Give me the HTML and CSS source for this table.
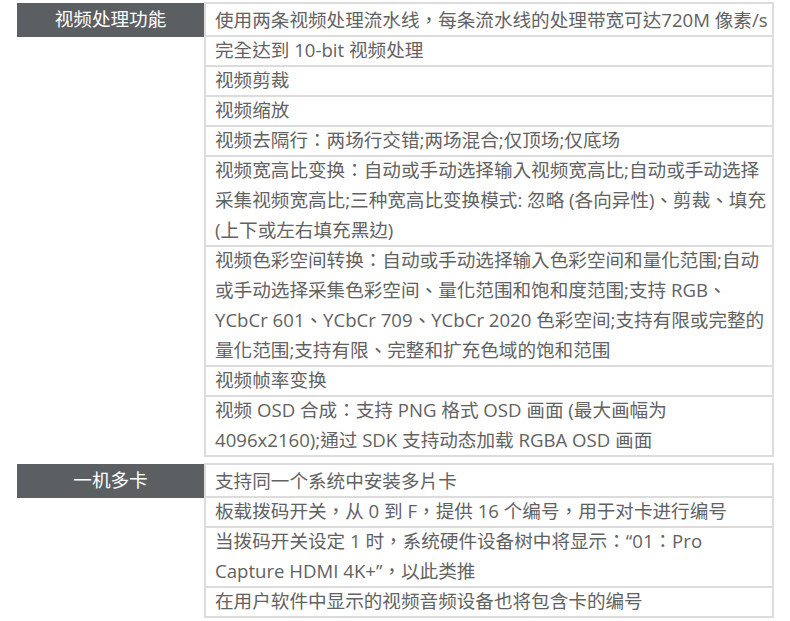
FILE: index.html
```
<!DOCTYPE html>
<html lang="zh-CN">
<head>
    <meta charset="UTF-8">
    <meta name="viewport" content="width=device-width, initial-scale=1.0">
    <title>产品功能</title>
    <link rel="stylesheet" href="styles.css">
</head>
<body>

<div class="specs">
    <div class="specGroup">
        <div class="specName">视频处理功能</div>
        <div class="specList">
            <div class="specItem">使用两条视频处理流水线，每条流水线的处理带宽可达720M 像素/s</div>
            <div class="specItem">完全达到 10-bit 视频处理</div>
            <div class="specItem">视频剪裁</div>
            <div class="specItem">视频缩放</div>
            <div class="specItem">视频去隔行：两场行交错;两场混合;仅顶场;仅底场</div>
            <div class="specItem">视频宽高比变换：自动或手动选择输入视频宽高比;自动或手动选择采集视频宽高比;三种宽高比变换模式: 忽略 (各向异性)、剪裁、填充 (上下或左右填充黑边)</div>
            <div class="specItem">视频色彩空间转换：自动或手动选择输入色彩空间和量化范围;自动或手动选择采集色彩空间、量化范围和饱和度范围;支持 RGB、YCbCr 601、YCbCr 709、YCbCr 2020 色彩空间;支持有限或完整的量化范围;支持有限、完整和扩充色域的饱和范围</div>
            <div class="specItem">视频帧率变换</div>
            <div class="specItem">视频 OSD 合成：支持 PNG 格式 OSD 画面 (最大画幅为 4096x2160);通过 SDK 支持动态加载 RGBA OSD 画面</div>
        </div>
    </div>

    <div class="specGroup">
        <div class="specName">一机多卡</div>
        <div class="specList">
            <div class="specItem">支持同一个系统中安装多片卡</div>
            <div class="specItem">板载拨码开关，从 0 到 F，提供 16 个编号，用于对卡进行编号</div>
            <div class="specItem">当拨码开关设定 1 时，系统硬件设备树中将显示：“01：Pro Capture HDMI 4K+”，以此类推</div>
            <div class="specItem">在用户软件中显示的视频音频设备也将包含卡的编号</div>
        </div>
    </div>
</div>

</body>
</html>
```

FILE: styles.css
```
body {
    font-family: 'Open Sans', 'Noto Sans CJK TC', sans-serif;
    font-feature-settings: "locl" 0;
    margin: 0;
    padding: 0;
    color: #626262;
    background-color: #fff;
}

.specs {
    padding: 2px 0 0 17px;
}

.specGroup {
    display: grid;
    grid-template-columns: 187px 570px;
    align-items: start;
    margin-bottom: 6px;
}

.specName {
    background-color: #5c5f62;
    color: #fff;
    font-size: 18.6px;
    height: 34px;
    line-height: 32px;
    margin-top: 1px;
    text-align: center;
}

.specList {
    border-left: 2px solid #dcdcdc;
    border-right: 2px solid #dcdcdc;
    border-bottom: 2px solid #dcdcdc;
}

/* the row line sits inside the 30px line box */
.specItem {
    box-shadow: inset 0 2px 0 #dcdcdc;
    font-size: 18.6px;
    line-height: 30px;
    padding: 0 3px 0 9px;
}

.specItem:first-child {
    padding-top: 3px;
}
```
